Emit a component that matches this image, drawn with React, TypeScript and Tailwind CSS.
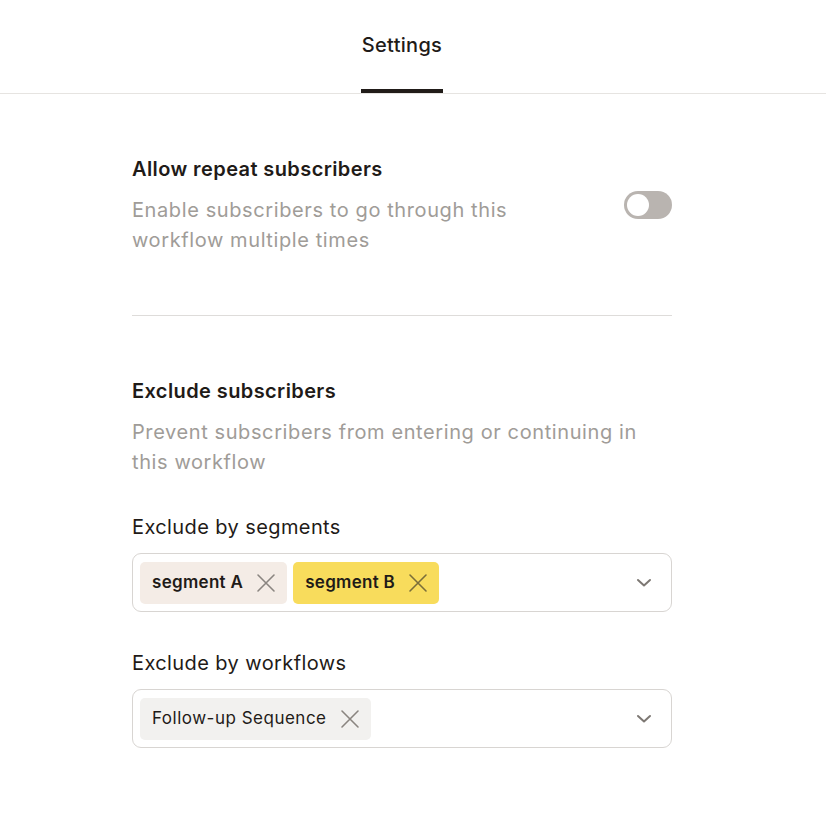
import React from "react";

const X = ({ color = "#8a8580" }: { color?: string }) => (
  <svg width="22" height="22" viewBox="0 0 22 22" fill="none">
    <path d="M3 3L19 19M19 3L3 19" stroke={color} strokeWidth="1.6" strokeLinecap="round" />
  </svg>
);

const Chevron = () => (
  <svg width="16" height="10" viewBox="0 0 16 10" fill="none">
    <path d="M2 2L8 7.5L14 2" stroke="#7d7873" strokeWidth="2" strokeLinecap="round" strokeLinejoin="round" />
  </svg>
);

export default function App() {
  return (
    <div className="min-h-[832px] bg-white text-[#1f1b18] tracking-[0.4px]" style={{ fontFamily: "Inter, 'Noto Sans', sans-serif" }}>
      <div className="border-b border-[#e6e4e1]">
        <div className="w-[804px] flex justify-center">
          <div className="pt-[30px] h-[93px] border-b-[4px] border-[#211c19] w-[82px] flex justify-center">
            <span className="text-[20px] font-medium leading-[30px] tracking-[0.3px]">Settings</span>
          </div>
        </div>
      </div>
      <div className="w-[804px]">
        <div className="mx-auto w-[540px] pt-[58px]">
          <div className="flex items-start justify-between">
            <div>
              <div className="text-[20px] font-semibold leading-[34px]">Allow repeat subscribers</div>
              <div className="mt-[9px] w-[420px] text-[20px] leading-[30px] tracking-[0.6px] text-[#a09c98]">
                Enable subscribers to go through this workflow multiple times
              </div>
            </div>
            <div className="mt-[39px] w-[48px] h-[28px] rounded-full bg-[#b9b4b0] flex items-center px-[3px]">
              <div className="w-[22px] h-[22px] rounded-full bg-white" />
            </div>
          </div>
          <div className="mt-[60px] h-px bg-[#dedcda]" />
          <div className="pt-[58px]">
            <div className="text-[20px] font-semibold leading-[34px]">Exclude subscribers</div>
            <div className="mt-[9px] text-[20px] leading-[30px] tracking-[0.6px] text-[#a09c98]">
              Prevent subscribers from entering or continuing in this workflow
            </div>
            <div className="mt-[35px] text-[20px] leading-[30px]">Exclude by segments</div>
            <div className="mt-[11px] h-[59px] rounded-[9px] border border-[#d8d5d2] flex items-center px-[7px] justify-between">
              <div className="flex gap-[6px]">
                <div className="h-[42px] rounded-[5px] bg-[#f4ece6] flex items-center pl-[12px] pr-[10px] gap-[12px]">
                  <span className="text-[17px] font-semibold tracking-[0.3px]">segment A</span>
                  <X />
                </div>
                <div className="h-[42px] rounded-[5px] bg-[#f8dc5c] flex items-center pl-[12px] pr-[10px] gap-[12px]">
                  <span className="text-[17px] font-semibold tracking-[0.3px]">segment B</span>
                  <X color="#7a6e3a" />
                </div>
              </div>
              <div className="pr-[12px]"><Chevron /></div>
            </div>
            <div className="mt-[36px] text-[20px] leading-[30px]">Exclude by workflows</div>
            <div className="mt-[11px] h-[59px] rounded-[9px] border border-[#d8d5d2] flex items-center px-[7px] justify-between">
              <div className="h-[42px] rounded-[5px] bg-[#f2f1ef] flex items-center pl-[12px] pr-[10px] gap-[12px]">
                <span className="text-[17px] tracking-[0.5px]">Follow-up Sequence</span>
                <X />
              </div>
              <div className="pr-[12px]"><Chevron /></div>
            </div>
          </div>
        </div>
      </div>
    </div>
  );
}
